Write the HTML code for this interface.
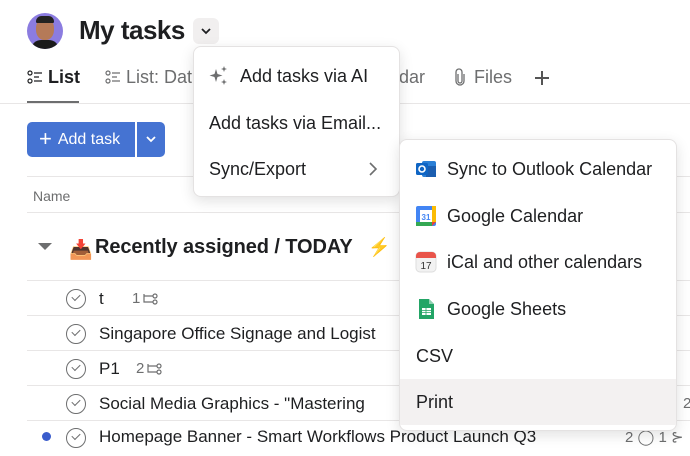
<!DOCTYPE html>
<html><head><style>
*{margin:0;padding:0;box-sizing:border-box}
body{width:690px;height:440px;overflow:hidden;background:#fff;font-family:"Liberation Sans",sans-serif;color:#1e1f21;position:relative}
.abs{position:absolute}
.hl{position:absolute;left:27px;right:0;height:1px;background:#e8e6e6}
.row{position:absolute;left:27px;right:0;height:35px;font-size:17px;display:flex;align-items:center}
.chk{position:absolute;left:39px;width:20px;height:20px;border:1.3px solid #6d6e6f;border-radius:50%}
.chk:after{content:"";position:absolute;left:5px;top:4px;width:7px;height:4px;border-left:1.3px solid #6d6e6f;border-bottom:1.3px solid #6d6e6f;transform:rotate(-45deg)}
.menu{position:absolute;background:#fff;border:1px solid #e4e2e2;border-radius:8px;box-shadow:0 4px 14px rgba(0,0,0,.12)}
.mi{position:absolute;left:0;right:0;height:46px;display:flex;align-items:center;font-size:18px;color:#1e1f21}
.sub{font-size:15px;color:#6d6e6f;display:flex;align-items:center;gap:3px}
</style></head><body>
<div class="abs" style="left:27px;top:13px;width:36px;height:36px;border-radius:50%;background:#8b7ce0;overflow:hidden">
 <div class="abs" style="left:9px;top:5px;width:18px;height:22px;border-radius:45%;background:#b57a58"></div>
 <div class="abs" style="left:9px;top:3px;width:18px;height:7px;border-radius:8px 8px 2px 2px;background:#222"></div>
 <div class="abs" style="left:4px;top:27px;width:28px;height:12px;border-radius:10px 10px 0 0;background:#1b1b1b"></div>
</div>
<div class="abs" style="left:79px;top:15px;font-size:26px;font-weight:bold;letter-spacing:-0.5px">My tasks</div>
<div class="abs" style="left:193px;top:18px;width:26px;height:26px;border-radius:6px;background:#f1efef"></div>
<svg class="abs" style="left:199px;top:25px" width="14" height="12"><path d="M3 4l4 4 4-4" stroke="#1e1f21" stroke-width="1.8" fill="none"/></svg>

<svg class="abs" style="left:27px;top:70px" width="16" height="14"><circle cx="3" cy="3" r="2" stroke="#1e1f21" fill="none" stroke-width="1.2"/><circle cx="3" cy="11" r="2" stroke="#1e1f21" fill="none" stroke-width="1.2"/><path d="M7 3h8M7 11h8M7 7h5" stroke="#1e1f21" stroke-width="1.3"/></svg>
<div class="abs" style="left:48px;top:67px;font-size:18px;font-weight:bold">List</div>
<div class="abs" style="left:27px;top:101px;width:52px;height:2px;background:#6d6e6f"></div>
<svg class="abs" style="left:105px;top:70px" width="16" height="14"><circle cx="3" cy="3" r="2" stroke="#6d6e6f" fill="none" stroke-width="1.2"/><circle cx="3" cy="11" r="2" stroke="#6d6e6f" fill="none" stroke-width="1.2"/><path d="M7 3h8M7 11h8M7 7h5" stroke="#6d6e6f" stroke-width="1.3"/></svg>
<div class="abs" style="left:126px;top:67px;font-size:18px;color:#6d6e6f">List: Dat</div>
<div class="abs" style="left:399px;top:67px;font-size:18px;color:#6d6e6f">dar</div>
<svg class="abs" style="left:454px;top:68px" width="12" height="18"><path d="M4 6v7a2 2 0 0 0 4 0V4a3 3 0 0 0-6 0v9a4 4 0 0 0 8 0V6" stroke="#6d6e6f" stroke-width="1.3" fill="none"/></svg>
<div class="abs" style="left:474px;top:67px;font-size:18px;color:#6d6e6f">Files</div>
<svg class="abs" style="left:533px;top:69px" width="18" height="18"><path d="M9 2v14M2 9h14" stroke="#555" stroke-width="2"/></svg>
<div class="abs" style="left:0;right:0;top:103px;height:1px;background:#e8e6e6"></div>

<div class="abs" style="left:27px;top:122px;width:108px;height:35px;background:#4573d2;border-radius:5px 0 0 5px;color:#fff;font-size:16px;display:flex;align-items:center"><span style="font-size:22px;margin:0 6px 2px 12px;line-height:1">+</span>Add task</div>
<div class="abs" style="left:137px;top:122px;width:28px;height:35px;background:#4573d2;border-radius:0 5px 5px 0"></div>
<svg class="abs" style="left:144px;top:133px" width="14" height="12"><path d="M3 4l4 4 4-4" stroke="#fff" stroke-width="1.8" fill="none"/></svg>
<div class="hl" style="top:176px"></div>
<div class="abs" style="left:33px;top:188px;font-size:14px;color:#6d6e6f">Name</div>
<div class="hl" style="top:212px"></div>
<svg class="abs" style="left:38px;top:243px" width="14" height="8"><path d="M0 0h14L7 7z" fill="#6d6e6f"/></svg>
<div class="abs" style="left:69px;top:238px;font-size:19px">📥</div>
<div class="abs" style="left:95px;top:236px;font-size:20px;font-weight:bold;letter-spacing:-0.1px">Recently assigned / TODAY</div>
<div class="abs" style="left:368px;top:237px;font-size:18px;color:#f0b73e">⚡</div>
<div class="hl" style="top:280px"></div>
<div class="row" style="top:281px"><div class="chk"></div><span style="position:absolute;left:72px">t</span><span class="sub" style="position:absolute;left:105px">1 <svg width="16" height="12"><path d="M1 1v8h9M1 3h9" stroke="#6d6e6f" stroke-width="1.2" fill="none"/><circle cx="12" cy="3" r="2" stroke="#6d6e6f" fill="none" stroke-width="1.2"/><circle cx="12" cy="9" r="2" stroke="#6d6e6f" fill="none" stroke-width="1.2"/></svg></span></div>
<div class="hl" style="top:315px"></div>
<div class="row" style="top:316px"><div class="chk"></div><span style="position:absolute;left:72px">Singapore Office Signage and Logist</span></div>
<div class="hl" style="top:350px"></div>
<div class="row" style="top:351px"><div class="chk"></div><span style="position:absolute;left:72px">P1</span><span class="sub" style="position:absolute;left:109px">2 <svg width="16" height="12"><path d="M1 1v8h9M1 3h9" stroke="#6d6e6f" stroke-width="1.2" fill="none"/><circle cx="12" cy="3" r="2" stroke="#6d6e6f" fill="none" stroke-width="1.2"/><circle cx="12" cy="9" r="2" stroke="#6d6e6f" fill="none" stroke-width="1.2"/></svg></span></div>
<div class="hl" style="top:385px"></div>
<div class="row" style="top:386px"><div class="chk"></div><span style="position:absolute;left:72px">Social Media Graphics - "Mastering</span><span style="position:absolute;left:656px;color:#6d6e6f;font-size:15px">2</span></div>
<div class="hl" style="top:420px"></div>
<div class="abs" style="left:42px;top:432px;width:9px;height:9px;border-radius:50%;background:#3a5ccc"></div>
<div class="row" style="top:421px"><div class="chk" style="top:7px"></div><span style="position:absolute;left:72px;top:6px">Homepage Banner - Smart Workflows Product Launch Q3</span><span style="position:absolute;left:598px;top:7px;color:#6d6e6f;font-size:15px">2 ◯ 1 ⊱</span></div>

<div class="menu" style="left:193px;top:46px;width:207px;height:151px">
 <div class="mi" style="top:6px"><svg style="margin-left:14px" width="22" height="22"><path d="M8 4l1.5 5 5 1.5-5 1.5L8 17l-1.5-5-5-1.5 5-1.5z" fill="#6d6e6f"/><path d="M16 1l.8 2.2 2.2.8-2.2.8L16 7l-.8-2.2L13 4l2.2-.8z" fill="#6d6e6f"/><path d="M16 14l.8 2.2 2.2.8-2.2.8L16 20l-.8-2.2L13 17l2.2-.8z" fill="#6d6e6f"/></svg><span style="margin-left:10px">Add tasks via AI</span></div>
 <div class="mi" style="top:53px"><span style="margin-left:15px">Add tasks via Email...</span></div>
 <div class="mi" style="top:99px"><span style="margin-left:15px">Sync/Export</span><svg class="abs" style="left:174px;top:15px" width="10" height="16"><path d="M2 2l6 6-6 6" stroke="#6d6e6f" stroke-width="1.6" fill="none"/></svg></div>
</div>

<div class="menu" style="left:399px;top:139px;width:278px;height:292px;overflow:hidden">
 <div class="mi" style="top:6px"><svg style="margin-left:15px" width="22" height="22"><rect x="7" y="3" width="14" height="16" rx="2" fill="#2a7fd6"/><rect x="11" y="8" width="10" height="11" fill="#1b5eb0"/><rect x="1" y="5" width="12" height="12" rx="1.5" fill="#0f65c4"/><circle cx="7" cy="11" r="3" stroke="#fff" stroke-width="1.6" fill="none"/></svg><span style="margin-left:10px">Sync to Outlook Calendar</span></div>
 <div class="mi" style="top:53px"><svg style="margin-left:15px" width="22" height="22"><rect x="1" y="1" width="20" height="20" rx="2" fill="#4285f4"/><rect x="1" y="17" width="16" height="4" fill="#34a853"/><rect x="17" y="1" width="4" height="16" fill="#fbbc04"/><path d="M17 17h4l-4 4z" fill="#ea4335"/><rect x="5" y="5" width="12" height="12" fill="#fff"/><text x="11" y="15" font-size="8" font-family="Liberation Sans" font-weight="bold" fill="#4285f4" text-anchor="middle">31</text></svg><span style="margin-left:10px">Google Calendar</span></div>
 <div class="mi" style="top:99px"><svg style="margin-left:15px" width="22" height="22"><rect x="1" y="1" width="20" height="20" rx="4" fill="#f2f2f2" stroke="#ddd"/><path d="M1 5a4 4 0 0 1 4-4h12a4 4 0 0 1 4 4v2H1z" fill="#e9544a"/><text x="11" y="18" font-size="10" font-family="Liberation Sans" fill="#333" text-anchor="middle">17</text></svg><span style="margin-left:10px">iCal and other calendars</span></div>
 <div class="mi" style="top:146px"><svg style="margin-left:15px" width="22" height="22"><path d="M4 1h10l5 5v15H4z" fill="#23a566"/><path d="M14 1v5h5z" fill="#8ed1b1"/><rect x="7" y="10" width="9" height="7" fill="#fff"/><path d="M7 12.5h9M7 14.5h9M11 10v7" stroke="#23a566" stroke-width=".8"/></svg><span style="margin-left:10px">Google Sheets</span></div>
 <div class="mi" style="top:193px"><span style="margin-left:16px">CSV</span></div>
 <div class="mi" style="top:239px;background:#f3f1f1;height:46px"><span style="margin-left:16px">Print</span></div>
</div>
</body></html>
